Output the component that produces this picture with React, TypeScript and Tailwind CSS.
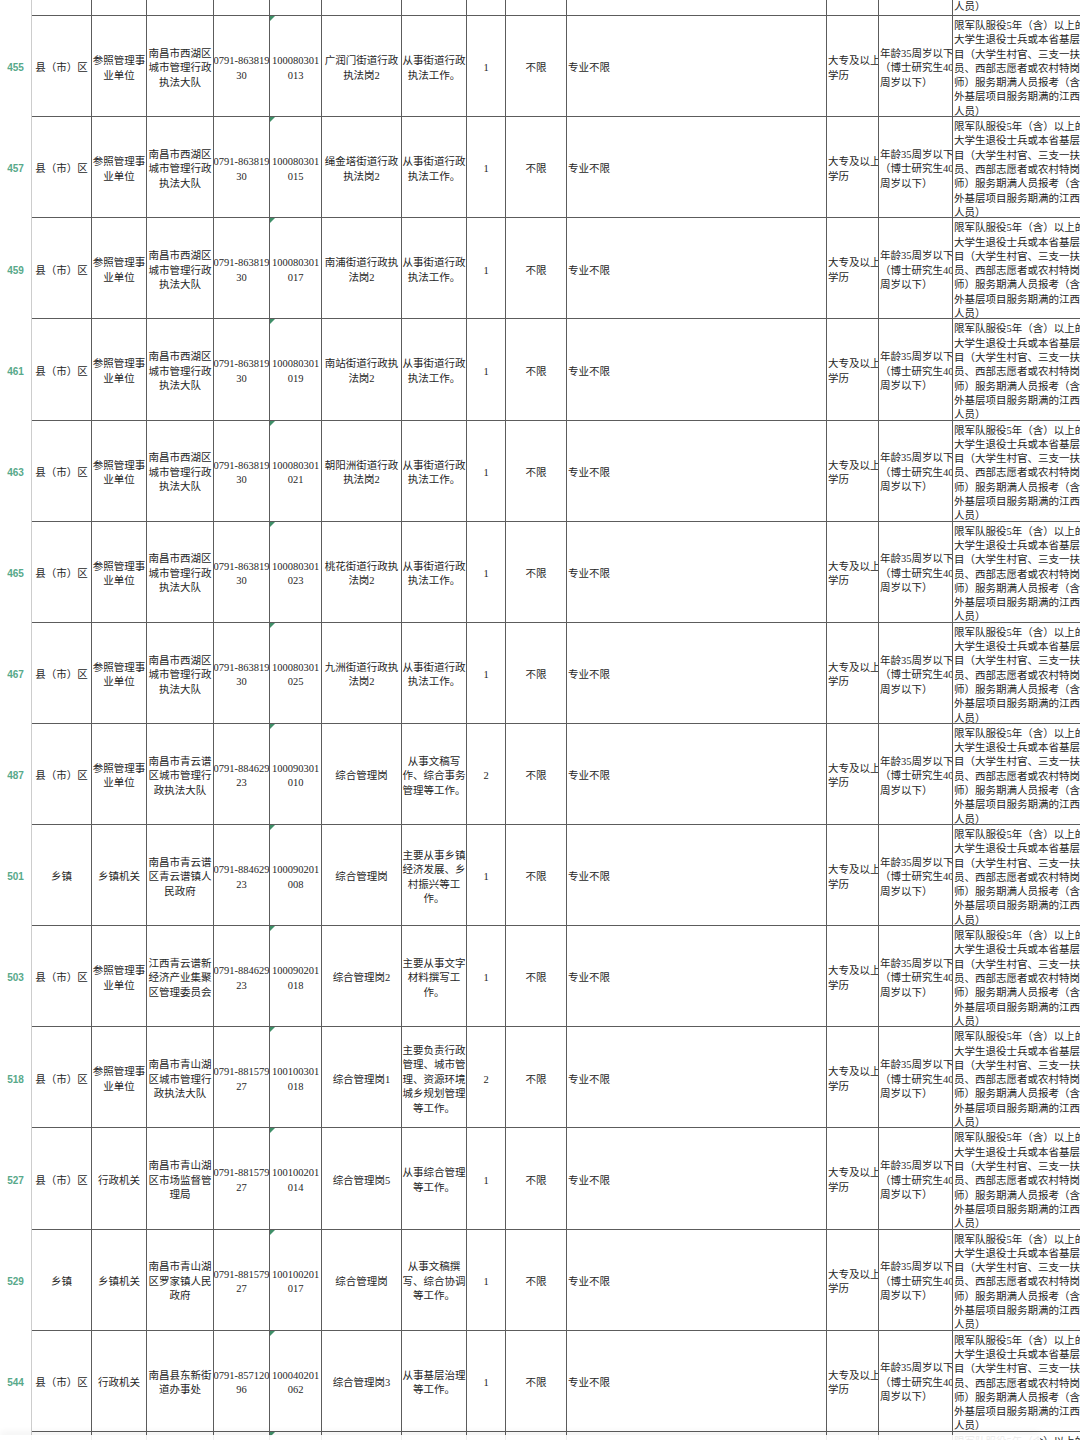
import React from 'react';

interface RowData {
  n: string;
  a: string[];
  b: string[];
  c: string[];
  d: string[];
  e: string[];
  f: string[];
  g: string[];
  h: string;
}

const NOTE = [
  '限军队服役5年（含）以上的',
  '大学生退役士兵或本省基层项',
  '目（大学生村官、三支一扶人',
  '员、西部志愿者或农村特岗教',
  '师）服务期满人员报考（含省',
  '外基层项目服务期满的江西籍',
  '人员）',
];

const xiguan = (n: string, post: string[], code: string): RowData => ({
  n,
  a: ['县（市）区'],
  b: ['参照管理事', '业单位'],
  c: ['南昌市西湖区', '城市管理行政', '执法大队'],
  d: ['0791-863819', '30'],
  e: ['100080301', code],
  f: post,
  g: ['从事街道行政', '执法工作。'],
  h: '1',
});

const rows: RowData[] = [
  xiguan('455', ['广润门街道行政', '执法岗2'], '013'),
  xiguan('457', ['绳金塔街道行政', '执法岗2'], '015'),
  xiguan('459', ['南浦街道行政执', '法岗2'], '017'),
  xiguan('461', ['南站街道行政执', '法岗2'], '019'),
  xiguan('463', ['朝阳洲街道行政', '执法岗2'], '021'),
  xiguan('465', ['桃花街道行政执', '法岗2'], '023'),
  xiguan('467', ['九洲街道行政执', '法岗2'], '025'),
  {
    n: '487',
    a: ['县（市）区'],
    b: ['参照管理事', '业单位'],
    c: ['南昌市青云谱', '区城市管理行', '政执法大队'],
    d: ['0791-884629', '23'],
    e: ['100090301', '010'],
    f: ['综合管理岗'],
    g: ['从事文稿写', '作、综合事务', '管理等工作。'],
    h: '2',
  },
  {
    n: '501',
    a: ['乡镇'],
    b: ['乡镇机关'],
    c: ['南昌市青云谱', '区青云谱镇人', '民政府'],
    d: ['0791-884629', '23'],
    e: ['100090201', '008'],
    f: ['综合管理岗'],
    g: ['主要从事乡镇', '经济发展、乡', '村振兴等工', '作。'],
    h: '1',
  },
  {
    n: '503',
    a: ['县（市）区'],
    b: ['参照管理事', '业单位'],
    c: ['江西青云谱新', '经济产业集聚', '区管理委员会'],
    d: ['0791-884629', '23'],
    e: ['100090201', '018'],
    f: ['综合管理岗2'],
    g: ['主要从事文字', '材料撰写工', '作。'],
    h: '1',
  },
  {
    n: '518',
    a: ['县（市）区'],
    b: ['参照管理事', '业单位'],
    c: ['南昌市青山湖', '区城市管理行', '政执法大队'],
    d: ['0791-881579', '27'],
    e: ['100100301', '018'],
    f: ['综合管理岗1'],
    g: ['主要负责行政', '管理、城市管', '理、资源环境', '城乡规划管理', '等工作。'],
    h: '2',
  },
  {
    n: '527',
    a: ['县（市）区'],
    b: ['行政机关'],
    c: ['南昌市青山湖', '区市场监督管', '理局'],
    d: ['0791-881579', '27'],
    e: ['100100201', '014'],
    f: ['综合管理岗5'],
    g: ['从事综合管理', '等工作。'],
    h: '1',
  },
  {
    n: '529',
    a: ['乡镇'],
    b: ['乡镇机关'],
    c: ['南昌市青山湖', '区罗家镇人民', '政府'],
    d: ['0791-881579', '27'],
    e: ['100100201', '017'],
    f: ['综合管理岗'],
    g: ['从事文稿撰', '写、综合协调', '等工作。'],
    h: '1',
  },
  {
    n: '544',
    a: ['县（市）区'],
    b: ['行政机关'],
    c: ['南昌县东新街', '道办事处'],
    d: ['0791-857120', '96'],
    e: ['100040201', '062'],
    f: ['综合管理岗3'],
    g: ['从事基层治理', '等工作。'],
    h: '1',
  },
];

const Cell = ({
  w,
  lines = [],
  left,
  flag,
  align = 'justify-center pt-[5px]',
}: {
  w: string;
  lines?: string[];
  left?: boolean;
  flag?: boolean;
  align?: string;
}) => (
  <div
    className={`${w} relative shrink-0 overflow-hidden border-r border-b border-[#5c5c5c] flex flex-col ${align} ${
      left ? 'items-start pl-[1px] text-left' : 'items-center text-center'
    }`}
  >
    {flag && (
      <div className="absolute top-0 left-0 w-0 h-0 border-t-[5px] border-r-[5px] border-t-[#3f8f68] border-r-transparent" />
    )}
    {lines.map((l, i) => (
      <div key={i} className="whitespace-nowrap">
        {l}
      </div>
    ))}
  </div>
);

const NumCell = ({ n }: { n?: string }) => (
  <div className="w-[32px] shrink-0 border-r border-[#cdcdcd] flex items-center justify-center pt-[4px] font-['Liberation_Sans',sans-serif] text-[10px] font-semibold text-[#58a98a]">
    {n}
  </div>
);

const Row = ({ r }: { r: RowData }) => (
  <div className="flex h-[101.14px]">
    <NumCell n={r.n} />
    <Cell w="w-[60px]" lines={r.a} />
    <Cell w="w-[55px]" lines={r.b} />
    <Cell w="w-[67px]" lines={r.c} />
    <Cell w="w-[56px]" lines={r.d} />
    <Cell w="w-[52px]" lines={r.e} flag />
    <Cell w="w-[80px]" lines={r.f} />
    <Cell w="w-[65px]" lines={r.g} />
    <Cell w="w-[39px]" lines={[r.h]} />
    <Cell w="w-[61px]" lines={['不限']} />
    <Cell w="w-[260px]" lines={['专业不限']} left />
    <Cell w="w-[52px]" lines={['大专及以上', '学历']} left />
    <Cell w="w-[74px]" lines={['年龄35周岁以下', '（博士研究生40', '周岁以下）']} left />
    <Cell w="w-[150px] leading-[14.3px]" lines={NOTE} left align="justify-start pt-[3px]" />
  </div>
);

const EdgeRow = ({ h, note, align, flag }: { h: string; note: string[]; align: string; flag?: boolean }) => (
  <div className={`flex ${h}`}>
    <NumCell />
    <Cell w="w-[60px]" />
    <Cell w="w-[55px]" />
    <Cell w="w-[67px]" />
    <Cell w="w-[56px]" />
    <Cell w="w-[52px]" flag={flag} />
    <Cell w="w-[80px]" />
    <Cell w="w-[65px]" />
    <Cell w="w-[39px]" />
    <Cell w="w-[61px]" />
    <Cell w="w-[260px]" />
    <Cell w="w-[52px]" />
    <Cell w="w-[74px]" />
    <Cell w="w-[150px] leading-[14.3px]" lines={note} left align={align} />
  </div>
);

export default function App() {
  return (
    <div className="relative w-[1080px] h-[1440px] overflow-hidden bg-white text-[#262626] text-[10.5px] leading-[14.5px] font-['Liberation_Serif','Noto_Sans_CJK_SC',serif]">
      <div className="w-max">
        <EdgeRow h="h-[16px]" note={['外基层项目服务期满的江西籍', '人员）']} align="justify-end pb-[1px]" />
        {rows.map((r) => (
          <Row key={r.n} r={r} />
        ))}
        <EdgeRow h="h-[40px]" note={NOTE} align="justify-start pt-[3px]" flag />
      </div>
      {/* soft band over the bottom edge */}
      <div className="absolute bottom-0 left-0 w-[1040px] h-[5px] bg-white/90 shadow-[0_-3px_6px_rgba(0,0,0,0.06)]" />
    </div>
  );
}
